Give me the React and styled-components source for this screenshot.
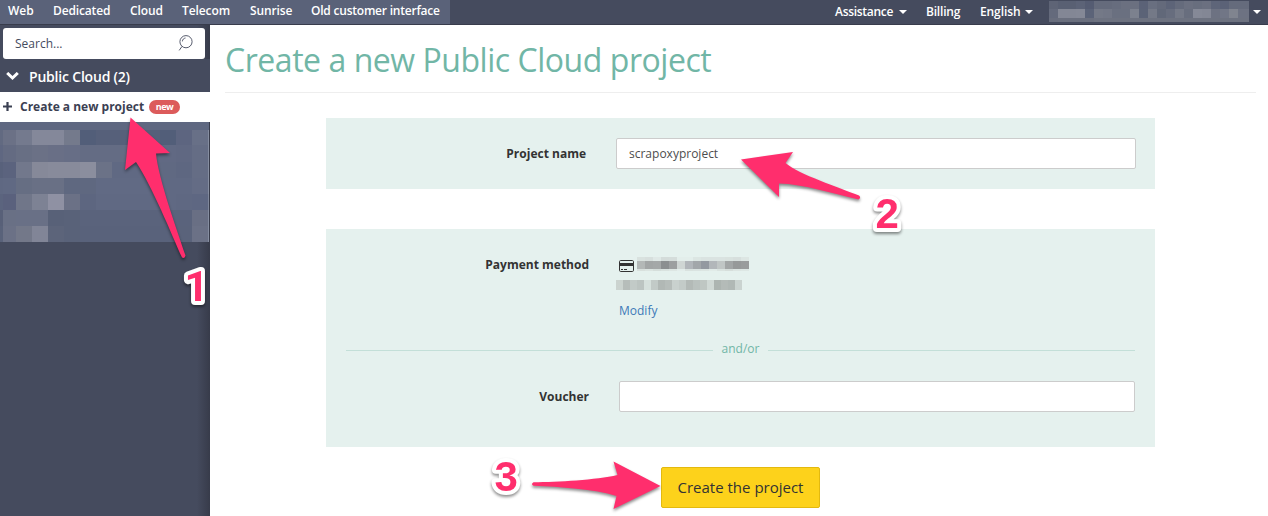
import React from 'react';
import styled, { createGlobalStyle } from 'styled-components';

const GlobalStyle = createGlobalStyle`
  *, *::before, *::after { box-sizing: border-box; }
  body {
    margin: 0;
    background: #fff;
    color: #333;
    font-family: 'Open Sans', 'Noto Sans', sans-serif;
    font-size: 12px;
    overflow: hidden;
  }
`;

const Page = styled.div`
  position: relative;
  width: 1268px;
  height: 516px;
  overflow: hidden;
`;

const TopBar = styled.header`
  display: flex;
  justify-content: space-between;
  height: 25px;
  background: #454b5e;
  border-bottom: 1px solid #383c4c;
`;

const Universes = styled.nav`
  display: flex;
  gap: 20px;
  width: 450px;
  padding-left: 8px;
  background: #5a6279;
`;

const NavLink = styled.a`
  width: ${(p) => p.$width}px;
  color: #fff;
  font-weight: 600;
  letter-spacing: ${(p) => p.$tracking || 0}px;
  line-height: 21px;
  white-space: nowrap;
`;

const UserMenu = styled.nav`
  display: flex;
  width: 433px;
`;

const MenuLink = styled(NavLink)`
  display: flex;
  align-items: center;
  justify-content: space-between;
  height: 22px;
  margin-right: ${(p) => p.$after || 0}px;
`;

const Caret = styled.span`
  margin-top: 2px;
  border: 4px solid transparent;
  border-top-color: #fff;
  border-bottom: 0;
`;

const Mosaic = styled.div`
  display: grid;
  grid-template-columns: ${(p) => p.$cols};
  grid-template-rows: ${(p) => p.$rows};
`;

const Cell = styled.i`
  background: ${(p) => p.$tone};
`;

const Body = styled.div`
  display: flex;
  height: 491px;
`;

const Sidebar = styled.aside`
  width: 210px;
  padding-top: 3px;
  background: linear-gradient(90deg, transparent 197px, #373b4a 210px), #454b5e;
`;

const SearchBox = styled.label`
  display: flex;
  align-items: center;
  justify-content: space-between;
  width: 202px;
  height: 31px;
  margin-left: 3px;
  padding: 0 11px 0 12px;
  border-radius: 3px;
  background: #fff;
  color: #454b5e;
`;

const SectionTitle = styled.div`
  display: flex;
  align-items: center;
  gap: 10px;
  height: 33px;
  padding: 1px 0 0 6px;
  background: #454b5e;
  color: #fff;
  font-size: 14px;
  font-weight: 600;
  letter-spacing: -0.2px;
`;

const ActiveItem = styled.div`
  display: flex;
  align-items: center;
  height: 30px;
  padding-left: 3px;
  background: #fff;
  color: #3b4052;
  font-weight: 700;
  white-space: nowrap;
`;

const ItemLabel = styled.span`
  width: 124px;
  margin: 0 5px 0 8px;
  line-height: 18px;
`;

const Badge = styled.span`
  width: 31px;
  height: 14px;
  border-radius: 7px;
  background: #dc5b5b;
  color: #fff;
  font-size: 9px;
  letter-spacing: -0.4px;
  line-height: 13px;
  text-align: center;
`;

const Content = styled.main`
  flex: 1;
  padding: 0 12px 0 15px;
`;

const Title = styled.h1`
  height: 68px;
  margin: 0 0 25px;
  padding-top: 12px;
  border-bottom: 1px solid #eee;
  color: #71b6a6;
  font-size: 32px;
  font-weight: 400;
  letter-spacing: -0.46px;
  line-height: 45px;
`;

const Panel = styled.section`
  width: 829px;
  height: ${(p) => p.$height}px;
  margin: 0 0 ${(p) => p.$after}px 101px;
  padding: 20px ${(p) => p.$right}px 0 20px;
  background: #e5f1ee;
`;

const Row = styled.div`
  display: flex;
  height: ${(p) => p.$height}px;
`;

const FieldLabel = styled.label`
  width: ${(p) => p.$width}px;
  margin-right: ${(p) => p.$gap}px;
  color: #333;
  font-weight: 700;
  line-height: 31px;
  text-align: right;
`;

const Input = styled.input`
  flex: 1;
  height: 31px;
  padding: 0 12px;
  border: 1px solid #ccc;
  border-radius: 2px;
  background: #fff;
  color: #4d4d4d;
  font: inherit;
  outline: 0;
`;

const CardDetails = styled.div`
  display: flex;
  flex-direction: column;
  align-items: flex-start;
  padding-top: 8px;
`;

const CardLine = styled.div`
  display: flex;
  height: ${(p) => p.$height}px;
  gap: 2px;
`;

const CardIconSlot = styled.span`
  padding: 3px 0 0 3px;
`;

const ModifyLink = styled.a`
  margin: 11px 0 0 3px;
  color: #3d79b8;
  line-height: 18px;
`;

const Separator = styled.div`
  display: flex;
  align-items: center;
  gap: 9px;
  height: 18px;
  margin: -1px 0 22px;
  color: #71b6a6;
  line-height: 18px;

  &::before, &::after {
    content: '';
    flex: 1;
    height: 1px;
    background: #c3dfd8;
  }
`;

const SeparatorText = styled.span`
  height: 20px;
`;

const SubmitButton = styled.button`
  display: block;
  width: 159px;
  height: 41px;
  margin-left: 436px;
  padding: 0 0 2px;
  border: 1px solid #e3b90f;
  border-radius: 2px;
  background: #fdd21b;
  color: #333;
  font: 400 15px 'Open Sans', sans-serif;
`;

const Annotations = styled.svg`
  position: absolute;
  inset: 0;
  pointer-events: none;
  filter: drop-shadow(0 2px 1.5px rgba(0, 0, 0, 0.45));
`;

const Arrow = styled.path`
  fill: #ff2e6d;
`;

const StepNumber = styled.text`
  fill: #ff2e6d;
  stroke: #fff;
  stroke-width: 8px;
  stroke-linejoin: round;
  paint-order: stroke;
  font: 700 42px ${(p) => (p.$plain ? 'Roboto' : "'Liberation Sans'")}, Arial, sans-serif;
`;

const universes = [
  ['Web', 25, 0], ['Dedicated', 57, -0.15], ['Cloud', 32, -0.1], ['Telecom', 48, -0.1],
  ['Sunrise', 41, -0.1], ['Old customer interface', 130, -0.22],
];

const projectTones = [
  '#5f6881 #5f6881 #5f6881 #5f6881 #5f6881 #5f6881 #5f6881 #5f6881 #5f6881 #5f6881 #5f6881 #5f6881 #5f6881 #5f6881 #5f6881',
  '#626a81 #6b7186 #747a8e #84889a #84889a #747a8c #525e79 #56607a #56607a #56607a #56607a #525e79 #5d6580 #687087 #858da0',
  '#5f6781 #646b82 #686f84 #6b7186 #696f86 #676e86 #646c84 #646c84 #646c84 #636b84 #626a83 #616983 #606882 #656d85 #858da0',
  '#58617b #5b637e #72788c #868999 #888b9b #888b9b #8b8e9e #6b7287 #606983 #606983 #606983 #606982 #5e6781 #656d85 #858da0',
  '#5f6882 #606983 #666e83 #697085 #697085 #5f6880 #5f6880 #616a84 #616a84 #616a84 #616a84 #606983 #606983 #646c85 #858da0',
  '#5b647e #5a617d #707689 #7d8294 #8f91a3 #6b7186 #5d6680 #606983 #606983 #606983 #606983 #606983 #5f6882 #5e6782 #7f879b',
  '#586078 #697085 #697086 #697086 #586178 #596279 #5a637c #5a637c #5a637c #5a637c #5a637c #5a637c #5a637c #696f84 #858da0',
  '#59627a #6b7186 #737889 #818597 #5c647a #596279 #59627b #59627b #59627b #59627b #59627b #59627b #5a637b #6b7186 #858da0',
].map((row) => row.split(' '));

const accountTones = [
  '#5e6476 #596073 #596073 #5c6377 #555c72 #656b7c #656b7c #676d7e #6b7080 #6b7080 #5b6277 #696f80 #646a7b #5d6478 #656b7c #6b7080 #686e7e #6b7080 #5e6579 #5b6277 #656b7c #656b7c',
  '#646a7c #838795 #838795 #848896 #5b6378 #747987 #727786 #6a7080 #6a7080 #7c818e #5b6377 #747987 #616879 #676d7e #747987 #686e7e #858997 #838795 #6d7282 #717686 #80848f #6d7282',
  '#686d7d #6a6f7e #6a6f7e #6a6f7e #6a6f7e #6d7280 #6d7280 #6d7280 #6d7280 #6d7280 #6d7280 #6d7280 #6d7280 #6d7280 #6d7280 #6d7280 #6d7280 #6d7280 #6d7280 #6d7280 #6d7280 #6d7280',
].map((row) => row.split(' '));

const cardTones = [
  '#d9e2df #d7dfdd #dfe8e6 #d4dcda #d5dddb #e3eeeb #e3eeeb #dce6e3 #dae3e1 #dae3e1 #dae3e1 #d9e2df #d7dfdd #dde6e3',
  '#b3b8b7 #a2a6a6 #a4a8a8 #8b8f90 #9c9fa0 #cfd6d4 #b1b6ba #a2a7aa #9399a0 #b2b7ba #c0c6c5 #a2a6a6 #969999 #999c9c',
  '#d8e0dd #dbe4e1 #d5dedb #d9e2df #dde6e3 #e3edeb #d9e2df #dae3e1 #dce5e2 #e1ebe8 #dae3e0 #d6dedb #dce5e2 #dde7e4',
].map((row) => row.split(' '));

const numberTones = [
  '#cbd3cf #b6bdba #c2cac7 #bcc4c1 #d6e0dc #c2cac7 #b1b8b5 #b6bdba #c9d1ce #c3cbc8 #b3bab7 #bac2bf #bfc7c3 #d0d9d5 #adb5b1 #b4bbb8 #b0b8b5 #cad3d0',
].map((row) => row.split(' '));

function Redacted({ tones, cols, rows }) {
  return (
    <Mosaic $cols={cols} $rows={rows} aria-hidden="true">
      {tones.flatMap((row, y) => row.map((tone, x) => <Cell key={`${y}-${x}`} $tone={tone} />))}
    </Mosaic>
  );
}

function SearchIcon() {
  return (
    <svg width="17" height="18" viewBox="0 0 17 18" fill="none" stroke="#454b5e" strokeWidth="0.9">
      <circle cx="9" cy="6.7" r="6.1" />
      <path d="M5.4 6.4C5.4 4.6 6.7 3.2 8.5 3M5 11.4 2.2 15.4" />
    </svg>
  );
}

function ChevronIcon() {
  return (
    <svg width="13" height="9" viewBox="0 0 13 9" fill="none" stroke="#fff" strokeWidth="3">
      <path d="M1.2 1 6.5 6 11.8 1" />
    </svg>
  );
}

function PlusIcon() {
  return (
    <svg width="9" height="10" viewBox="0 0 9 10" stroke="#3b4052" strokeWidth="2.2">
      <path d="M4.5 0V9M0 4.5H9" />
    </svg>
  );
}

function CardIcon() {
  return (
    <svg width="16" height="13" viewBox="0 0 16 13">
      <rect x="0.5" y="0.5" width="14" height="11" rx="1.2" fill="none" stroke="#333" />
      <path d="M1 3H14V6H1zM2 9H4V10H2zM5 9H8V10H5z" fill="#333" />
    </svg>
  );
}

export default function App() {
  return (
    <Page>
      <GlobalStyle />
      <TopBar>
        <Universes>
          {universes.map(([name, width, tracking]) => (
            <NavLink key={name} $width={width} $tracking={tracking}>{name}</NavLink>
          ))}
        </Universes>
        <UserMenu>
          <MenuLink $width={72} $after={19} $tracking={-0.3}>Assistance <Caret /></MenuLink>
          <MenuLink $width={34} $after={20} $tracking={-0.2}>Billing</MenuLink>
          <MenuLink $width={53} $after={16} $tracking={-0.1}>English <Caret /></MenuLink>
          <MenuLink $width={212}>
            <Redacted tones={accountTones} cols="9px repeat(20, 9px) 11px" rows="8px 9px 4px" />
            <Caret />
          </MenuLink>
        </UserMenu>
      </TopBar>
      <Body>
        <Sidebar>
          <SearchBox>Search... <SearchIcon /></SearchBox>
          <SectionTitle><ChevronIcon />Public Cloud (2)</SectionTitle>
          <ActiveItem>
            <PlusIcon />
            <ItemLabel>Create a new project</ItemLabel>
            <Badge>new</Badge>
          </ActiveItem>
          <Redacted tones={projectTones} cols="3px 13px repeat(11, 16px) 16px 1px" rows="8px 15px 17px repeat(5, 16px)" />
        </Sidebar>
        <Content>
          <Title>Create a new Public Cloud project</Title>
          <Panel $height={71} $after={40} $right={19}>
            <Row $height={31}>
              <FieldLabel $width={240} $gap={30}>Project name</FieldLabel>
              <Input defaultValue="scrapoxyproject" aria-label="Project name" />
            </Row>
          </Panel>
          <Panel $height={218} $after={20} $right={20}>
            <Row $height={93}>
              <FieldLabel $width={243} $gap={27}>Payment method</FieldLabel>
              <CardDetails>
                <CardLine $height={23}>
                  <CardIconSlot><CardIcon /></CardIconSlot>
                  <Redacted tones={cardTones} cols="repeat(14, 8px)" rows="4px 8px 2px" />
                </CardLine>
                <CardLine $height={11}>
                  <Redacted tones={numberTones} cols="repeat(18, 7px)" rows="10px" />
                </CardLine>
                <ModifyLink>Modify</ModifyLink>
              </CardDetails>
            </Row>
            <Separator><SeparatorText>and/or</SeparatorText></Separator>
            <Row $height={31}>
              <FieldLabel $width={243} $gap={30}>Voucher</FieldLabel>
              <Input aria-label="Voucher" />
            </Row>
          </Panel>
          <SubmitButton>Create the project</SubmitButton>
        </Content>
      </Body>
      <Annotations width="1268" height="516" viewBox="0 0 1268 516">
        <Arrow d="M130.5 117.5 170 153 156 153.5C158 178 178 233 185.5 255.5Q185 259 182 257.5C171 233 153 188 136 162L125 170Z" />
        <Arrow d="M741 159.5 793 152 785.5 163C798 174 840 188 859 195.5Q861.5 198 858.5 199.5C835 194 803 184 779 183.5V197Z" />
        <Arrow d="M660.5 486 613.5 461.5 617.5 475C596 480 558 482 533.5 482.2Q530.5 484 533.5 485.8C560 487 594 489 616.5 496L613.5 509Z" />
        <StepNumber x="184.5" y="301.3" $plain>1</StepNumber>
        <StepNumber x="875.5" y="228">2</StepNumber>
        <StepNumber x="494.5" y="491">3</StepNumber>
      </Annotations>
    </Page>
  );
}
